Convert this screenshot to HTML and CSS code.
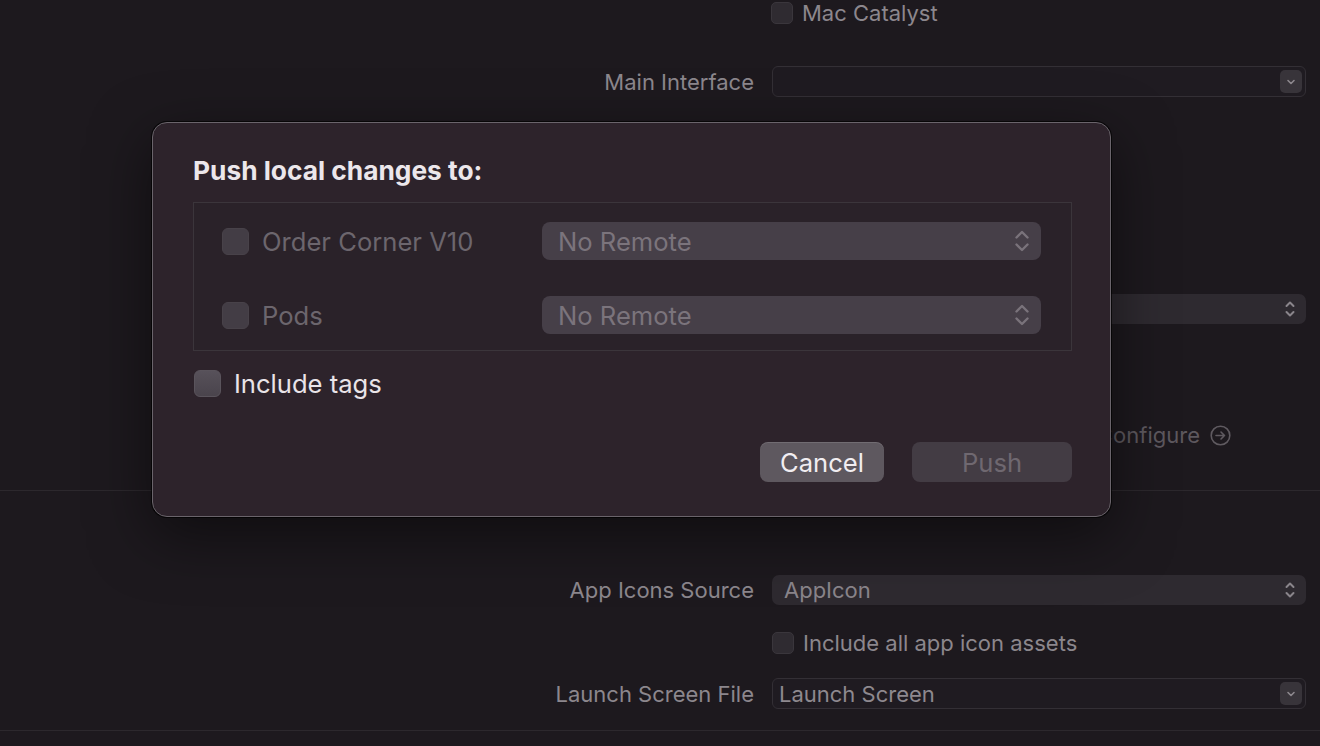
FILE: index.html
```html
<!DOCTYPE html>
<html lang="en">
<head>
  <meta charset="UTF-8">
  <meta name="viewport" content="width=device-width, initial-scale=1.0">
  <title>Push</title>
  <link rel="stylesheet" href="styles.css">
</head>
<body>
  <div class="window">
    <!-- target settings behind the sheet -->
    <div class="form">
      <div class="row row-catalyst">
        <span class="label"></span>
        <div class="check"><span class="check-box"></span>Mac Catalyst</div>
      </div>
      <div class="row row-main">
        <span class="label">Main Interface</span>
        <div class="combo">
          <span class="combo-text"></span>
          <span class="combo-btn">
            <svg width="10" height="8" viewBox="0 0 10 8"><path d="M2 2.5 L5 5.5 L8 2.5" fill="none" stroke="#8d888e" stroke-width="1.6" stroke-linecap="round" stroke-linejoin="round"/></svg>
          </span>
        </div>
      </div>
      <div class="row row-style">
        <span class="label"></span>
        <div class="popup">
          <span class="popup-text"></span>
          <svg class="updown" width="12" height="22" viewBox="0 0 12 22"><path d="M2.5 8 L6 4.5 L9.5 8 M2.5 14 L6 17.5 L9.5 14" fill="none" stroke="#8a858b" stroke-width="2" stroke-linecap="round" stroke-linejoin="round"/></svg>
        </div>
      </div>
      <div class="row row-config">
        <span class="label"></span>
        <div class="config-link">
          Configure
          <svg width="21" height="21" viewBox="0 0 21 21"><circle cx="10.5" cy="10.5" r="9.3" fill="none" stroke="#5f5a60" stroke-width="1.6"/><path d="M6 10.5 H14.5 M11 7 L14.5 10.5 L11 14" fill="none" stroke="#5f5a60" stroke-width="1.6" stroke-linecap="round" stroke-linejoin="round"/></svg>
        </div>
      </div>

      <div class="sep sep-first"></div>

      <div class="row row-icons">
        <span class="label">App Icons Source</span>
        <div class="popup">
          <span class="popup-text">AppIcon</span>
          <svg class="updown" width="12" height="22" viewBox="0 0 12 22"><path d="M2.5 8 L6 4.5 L9.5 8 M2.5 14 L6 17.5 L9.5 14" fill="none" stroke="#8a858b" stroke-width="2" stroke-linecap="round" stroke-linejoin="round"/></svg>
        </div>
      </div>
      <div class="row row-assets">
        <span class="label"></span>
        <div class="check"><span class="check-box"></span>Include all app icon assets</div>
      </div>
      <div class="row row-launch">
        <span class="label">Launch Screen File</span>
        <div class="combo">
          <span class="combo-text">Launch Screen</span>
          <span class="combo-btn">
            <svg width="10" height="8" viewBox="0 0 10 8"><path d="M2 2.5 L5 5.5 L8 2.5" fill="none" stroke="#8d888e" stroke-width="1.6" stroke-linecap="round" stroke-linejoin="round"/></svg>
          </span>
        </div>
      </div>

      <div class="sep sep-last"></div>
    </div>

    <!-- push sheet -->
    <div class="sheet">
      <h1 class="sheet-title">Push local changes to:</h1>

      <div class="remotes">
        <div class="remote-row">
          <div class="sheet-check disabled"><span class="sheet-box"></span>Order Corner V10</div>
          <div class="remote-popup">
            <span>No Remote</span>
            <svg width="16" height="26" viewBox="0 0 16 26"><path d="M2.5 9.5 L8 4 L13.5 9.5 M2.5 16.5 L8 22 L13.5 16.5" fill="none" stroke="#7a737b" stroke-width="2.4" stroke-linecap="round" stroke-linejoin="round"/></svg>
          </div>
        </div>
        <div class="remote-row">
          <div class="sheet-check disabled"><span class="sheet-box"></span>Pods</div>
          <div class="remote-popup">
            <span>No Remote</span>
            <svg width="16" height="26" viewBox="0 0 16 26"><path d="M2.5 9.5 L8 4 L13.5 9.5 M2.5 16.5 L8 22 L13.5 16.5" fill="none" stroke="#7a737b" stroke-width="2.4" stroke-linecap="round" stroke-linejoin="round"/></svg>
          </div>
        </div>
      </div>

      <div class="sheet-check tags"><span class="sheet-box"></span>Include tags</div>

      <div class="sheet-buttons">
        <button class="btn btn-cancel">Cancel</button>
        <button class="btn btn-push" disabled>Push</button>
      </div>
    </div>
  </div>
</body>
</html>
```

FILE: styles.css
```css
body {
  margin: 0;
  background: #1d191e;
  font-family: Inter, "Noto Sans", sans-serif;
  overflow: hidden;
}
.window {
  position: relative;
  width: 1320px;
  height: 746px;
  overflow: hidden;
}

/* Settings form */
.form {
  display: flex;
  flex-direction: column;
}
.row {
  display: grid;
  grid-template-columns: 1fr 534px;
  column-gap: 20px;
  align-items: center;
  padding-right: 14px;
}
.label {
  text-align: right;
  font-size: 22px;
  color: #8c878d;
  margin-right: -2px;
}
.row-catalyst { height: 24px; }
.row-main { margin-top: 42px; height: 31px; }
.row-style { margin-top: 197px; height: 30px; }
.row-config { margin-top: 98px; height: 24px; }
.row-icons { margin-top: 84px; height: 30px; }
.row-assets { margin-top: 25px; height: 23px; }
.row-launch { margin-top: 25px; height: 31px; }

.sep {
  height: 1px;
  background: #2c282d;
}
.sep-first { margin-top: 44px; }
.sep-last { margin-top: 21px; }

.check {
  display: flex;
  align-items: center;
  gap: 9px;
  font-size: 22px;
  color: #8c878d;
}
.check-box {
  width: 22px;
  height: 22px;
  border-radius: 5px;
  background: #2f2b31;
  border: 1px solid #3a363c;
  box-sizing: border-box;
}
.row-catalyst .check { margin-left: -1px; }

.combo {
  height: 31px;
  display: flex;
  align-items: center;
  justify-content: space-between;
  box-sizing: border-box;
  border: 1px solid #332f35;
  border-radius: 6px;
  background: #1f1b21;
  padding: 0 3px 0 6px;
}
.combo-text {
  font-size: 22px;
  color: #8e898f;
}
.combo-btn {
  width: 22px;
  height: 23px;
  border-radius: 5px;
  background: #38343a;
  display: flex;
  align-items: center;
  justify-content: center;
}

.popup {
  height: 30px;
  display: flex;
  align-items: center;
  justify-content: space-between;
  border-radius: 7px;
  background: #2e2a30;
  padding: 0 10px 0 12px;
}
.popup-text {
  font-size: 22px;
  color: #8a858b;
}

.config-link {
  display: flex;
  align-items: center;
  justify-content: flex-end;
  gap: 10px;
  padding-right: 75px;
  font-size: 22px;
  color: #5d585e;
}

/* Push sheet */
.sheet {
  position: absolute;
  left: 152px;
  top: 122px;
  width: 959px;
  height: 395px;
  box-sizing: border-box;
  padding: 32px 38px 34px 40px;
  background: #2d232b;
  border: 1px solid #6a646b;
  border-radius: 15px;
  box-shadow: 0 0 0 1px rgba(0, 0, 0, 0.7), 0 18px 60px rgba(0, 0, 0, 0.5);
  display: flex;
  flex-direction: column;
}
.sheet-title {
  margin: 0;
  font-size: 26.3px;
  line-height: 32px;
  font-weight: 700;
  color: #ece7eb;
}
.remotes {
  margin-top: 15px;
  height: 149px;
  box-sizing: border-box;
  border: 1px solid #3b353b;
  background: #2a2229;
  padding: 19px 29px 0 28px;
  display: flex;
  flex-direction: column;
  gap: 36px;
}
.remote-row {
  display: grid;
  grid-template-columns: 320px 499px;
  align-items: center;
  height: 38px;
}
.sheet-check {
  display: flex;
  align-items: center;
  gap: 13px;
  font-size: 25.6px;
  color: #e9e4e8;
}
.sheet-box {
  width: 27px;
  height: 27px;
  border-radius: 6px;
  background: linear-gradient(#57515a, #4a444c);
  box-sizing: border-box;
  border: 1px solid #5a545c;
}
.sheet-check.disabled {
  color: #6c666d;
}
.sheet-check.disabled .sheet-box {
  background: #433d45;
  border-color: #484249;
}
.remote-popup {
  height: 38px;
  border-radius: 8px;
  background: #463f48;
  display: flex;
  align-items: center;
  justify-content: space-between;
  padding: 0 11px 0 16px;
  font-size: 25.6px;
  color: #7b747c;
}
.tags {
  margin-top: 19px;
  height: 27px;
  margin-left: 1px;
}

.sheet-buttons {
  margin-top: 45px;
  display: flex;
  justify-content: flex-end;
  gap: 28px;
}
.btn {
  height: 40px;
  border: none;
  border-radius: 8px;
  font-family: Inter, "Noto Sans", sans-serif;
  font-size: 25.6px;
  padding: 0;
}
.btn-cancel {
  width: 124px;
  background: #5e585f;
  color: #f1edf1;
  box-shadow: inset 0 1px 0 rgba(255, 255, 255, 0.12);
}
.btn-push {
  width: 160px;
  background: #433c44;
  color: #6f6870;
}
```
